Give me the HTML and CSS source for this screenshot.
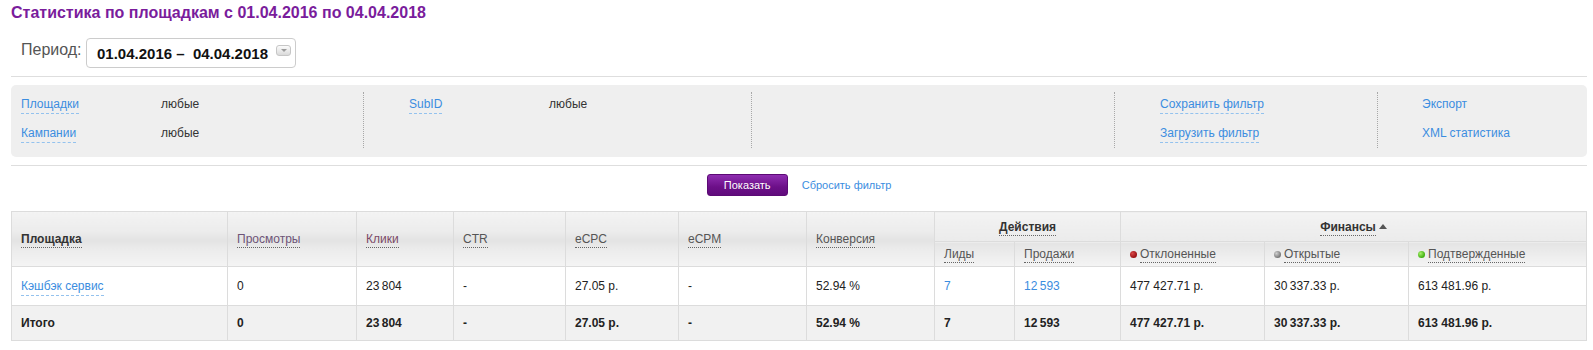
FILE: index.html
```html
<!DOCTYPE html>
<html lang="ru">
<head>
<meta charset="utf-8">
<title>Статистика по площадкам</title>
<link rel="stylesheet" href="styles.css">
</head>
<body>
<div class="page">
  <h1 class="title">Статистика по площадкам с 01.04.2016 по 04.04.2018</h1>

  <div class="period">
    <span class="period-label">Период:</span>
    <div class="date-box">
      <span class="date-text">01.04.2016 –&nbsp; 04.04.2018</span>
      <span class="dd"><span class="dd-arrow"></span></span>
    </div>
  </div>

  <div class="rule"></div>

  <div class="filters">
    <div class="fcol first">
      <div class="frow"><span class="key"><a class="dash">Площадки</a></span><span class="val">любые</span></div>
      <div class="frow"><span class="key"><a class="dash">Кампании</a></span><span class="val">любые</span></div>
    </div>
    <div class="fcol">
      <div class="frow"><span class="key"><a class="dash">SubID</a></span><span class="val">любые</span></div>
    </div>
    <div class="fcol"></div>
    <div class="fcol">
      <div class="frow"><span><a class="dash">Сохранить фильтр</a></span></div>
      <div class="frow"><span><a class="dash">Загрузить фильтр</a></span></div>
    </div>
    <div class="fcol last">
      <div class="frow"><span><a class="plain">Экспорт</a></span></div>
      <div class="frow"><span><a class="plain">XML статистика</a></span></div>
    </div>
  </div>

  <div class="rule rule2"></div>

  <div class="actions">
    <button class="btn" type="button">Показать</button>
    <a class="reset">Сбросить фильтр</a>
  </div>

  <table class="stats">
    <colgroup>
      <col style="width:216px">
      <col style="width:129px">
      <col style="width:97px">
      <col style="width:112px">
      <col style="width:113px">
      <col style="width:128px">
      <col style="width:128px">
      <col style="width:80px">
      <col style="width:106px">
      <col style="width:144px">
      <col style="width:144px">
      <col style="width:178px">
    </colgroup>
    <thead>
      <tr class="grp">
        <th rowspan="2" class="span"><span class="u strong">Площадка</span></th>
        <th rowspan="2" class="span"><span class="u visited">Просмотры</span></th>
        <th rowspan="2" class="span"><span class="u visited2">Клики</span></th>
        <th rowspan="2" class="span"><span class="u">CTR</span></th>
        <th rowspan="2" class="span"><span class="u">eCPC</span></th>
        <th rowspan="2" class="span"><span class="u">eCPM</span></th>
        <th rowspan="2" class="span"><span class="u">Конверсия</span></th>
        <th colspan="2" class="group"><span class="u strong">Действия</span></th>
        <th colspan="3" class="group"><span class="u strong">Финансы</span><span class="tri"></span></th>
      </tr>
      <tr class="sub">
        <th><span class="u">Лиды</span></th>
        <th><span class="u">Продажи</span></th>
        <th><span class="dot red"></span><span class="u">Отклоненные</span></th>
        <th><span class="dot gray"></span><span class="u">Открытые</span></th>
        <th><span class="dot green"></span><span class="u">Подтвержденные</span></th>
      </tr>
    </thead>
    <tbody>
      <tr class="data">
        <td><a class="dash">Кэшбэк сервис</a></td>
        <td>0</td>
        <td>23&thinsp;804</td>
        <td>-</td>
        <td>27.05 р.</td>
        <td>-</td>
        <td>52.94 %</td>
        <td><a class="plain">7</a></td>
        <td><a class="plain">12&thinsp;593</a></td>
        <td>477&nbsp;427.71 р.</td>
        <td>30&thinsp;337.33 р.</td>
        <td>613&nbsp;481.96 р.</td>
      </tr>
      <tr class="total">
        <td>Итого</td>
        <td>0</td>
        <td>23&thinsp;804</td>
        <td>-</td>
        <td>27.05 р.</td>
        <td>-</td>
        <td>52.94 %</td>
        <td>7</td>
        <td>12&thinsp;593</td>
        <td>477&nbsp;427.71 р.</td>
        <td>30&thinsp;337.33 р.</td>
        <td>613&nbsp;481.96 р.</td>
      </tr>
    </tbody>
  </table>
</div>
</body>
</html>
```
FILE: styles.css
```css
html, body {
  margin: 0;
  padding: 0;
  background: #fff;
}

body {
  font-family: "Liberation Sans", Arial, sans-serif;
  font-size: 12px;
  color: #222;
}

.page {
  padding: 4px 6px 0 11px;
}

.title {
  margin: 0;
  font-size: 16px;
  line-height: 18px;
  font-weight: bold;
  color: #7a1c9c;
}

.period {
  display: flex;
  align-items: flex-start;
  margin-top: 16px;
  padding-left: 10px;
}

.period-label {
  width: 60px;
  margin-top: 3px;
  margin-right: 5px;
  font-size: 16px;
  line-height: 18px;
  color: #555;
  white-space: nowrap;
}

.date-box {
  display: flex;
  align-items: center;
  box-sizing: border-box;
  width: 210px;
  height: 30px;
  padding-left: 10px;
  border: 1px solid #ccc;
  border-radius: 4px;
  background: #fff;
}

.date-text {
  font-size: 15px;
  font-weight: bold;
  color: #111;
  white-space: nowrap;
}

.dd {
  display: flex;
  align-items: center;
  justify-content: center;
  box-sizing: border-box;
  align-self: flex-start;
  width: 15px;
  height: 11px;
  margin: 6px 4px 0 auto;
  border: 1px solid #c6c6c6;
  border-radius: 3px;
  background: linear-gradient(#fbfbfb, #dadada);
}

.dd-arrow {
  width: 0;
  height: 0;
  border-left: 3px solid transparent;
  border-right: 3px solid transparent;
  border-top: 3px solid #9a9a9a;
}

.rule {
  height: 1px;
  margin-top: 8px;
  background: #dedede;
}

.filters {
  display: grid;
  grid-template-columns: 352px 388px 363px 263px 1fr;
  margin-top: 8px;
  padding: 7px 0 9px;
  border-radius: 5px;
  background: #efefef;
}

.fcol {
  height: 56px;
  padding-left: 45px;
  border-left: 1px dotted #a8a8a8;
}

.fcol.first {
  padding-left: 10px;
  border-left: none;
}

.fcol.last {
  padding-left: 44px;
}

.frow {
  display: flex;
  height: 15px;
  line-height: 15px;
  margin-top: 14px;
}

.frow:first-child {
  margin-top: 5px;
}

.key {
  width: 140px;
  flex: none;
}

.val {
  color: #333;
}

a {
  color: #3b8de0;
  text-decoration: none;
}

.dash {
  padding-bottom: 2px;
  border-bottom: 1px dashed #93c2ee;
}

.actions {
  display: flex;
  justify-content: center;
  align-items: center;
  gap: 14px;
  margin-top: 8px;
}

.btn {
  box-sizing: border-box;
  width: 81px;
  height: 22px;
  padding: 0;
  border: 1px solid #5c0a75;
  border-radius: 3px;
  background: linear-gradient(#8e2db0, #6c0f88 60%, #600b7c);
  color: #fff;
  font-family: "Liberation Sans", Arial, sans-serif;
  font-size: 11px;
}

.reset {
  font-size: 11px;
}

.stats {
  width: 1576px;
  margin-top: 15px;
  border-collapse: collapse;
  table-layout: fixed;
  font-size: 12px;
}

.stats th,
.stats td {
  padding: 0 9px;
  border: 1px solid #dcdcdc;
  text-align: left;
  vertical-align: middle;
  white-space: nowrap;
  overflow: hidden;
}

.stats th {
  font-weight: normal;
  color: #555;
}

.grp {
  height: 30px;
}

.sub {
  height: 25px;
}

.data {
  height: 39px;
}

.total {
  height: 35px;
}

.stats th.span {
  background: linear-gradient(#f3f3f3 0%, #ececec 35%, #e3e3e3 52%, #ececec 70%, #f4f4f4 100%);
}

.stats th.group {
  text-align: center;
  background: linear-gradient(#f3f3f3, #ebebeb);
}

.sub th {
  background: linear-gradient(#e4e4e4, #eeeeee 60%, #f4f4f4);
}

.u {
  padding-bottom: 1px;
  border-bottom: 1px dotted #666;
}

.u.strong {
  font-weight: bold;
  color: #333;
}

.u.visited {
  color: #6d5477;
}

.u.visited2 {
  color: #7b4a66;
}

.tri {
  display: inline-block;
  width: 0;
  height: 0;
  margin-left: 3px;
  vertical-align: 2px;
  border-left: 4px solid transparent;
  border-right: 4px solid transparent;
  border-bottom: 5px solid #555;
}

.dot {
  display: inline-block;
  width: 7px;
  height: 7px;
  margin-right: 3px;
  border-radius: 50%;
  vertical-align: 0;
}

.dot.red {
  background: radial-gradient(circle at 35% 35%, #d84848, #9a1014 70%);
}

.dot.gray {
  background: radial-gradient(circle at 35% 35%, #d0d0d0, #777 70%);
}

.dot.green {
  background: radial-gradient(circle at 35% 35%, #a6f06a, #3fae10 70%);
}

.data td {
  background: #fff;
  color: #222;
}

.total td {
  background: #f1f1f1;
  font-weight: bold;
  color: #222;
}
```
